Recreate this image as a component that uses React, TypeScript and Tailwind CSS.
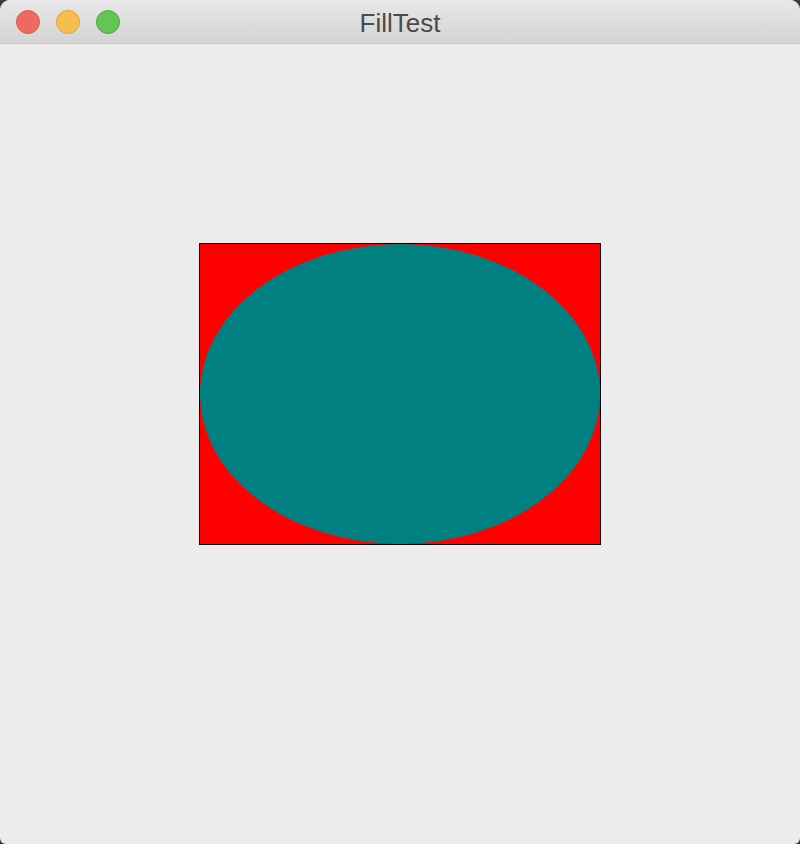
export default function App() {
  return (
    <div className="h-[844px] w-[800px] bg-[#3a3a3a]">
      <div className="flex h-full w-full flex-col overflow-hidden rounded-t-[10px] rounded-b-[6px] bg-[#ececec]">
        {/* title bar */}
        <div className="relative flex h-[44px] shrink-0 items-center justify-center border-b border-[#c4c4c4] bg-gradient-to-b from-[#e9e7e9] to-[#d4d4d4]">
          <div className="absolute left-[16px] top-[10px] flex gap-[16px]">
            <div className="h-[24px] w-[24px] rounded-full border border-[#de5750] bg-[#ee6a5f]" />
            <div className="h-[24px] w-[24px] rounded-full border border-[#dfa23a] bg-[#f5be4f]" />
            <div className="h-[24px] w-[24px] rounded-full border border-[#52a93f] bg-[#62c554]" />
          </div>
          <span className="pt-[3px] font-['Helvetica','Liberation_Sans',sans-serif] text-[26px] text-[#4a4a4a]">
            FillTest
          </span>
        </div>
        {/* canvas */}
        <div className="flex flex-1 justify-center pt-[199px]">
          <div className="h-[302px] w-[402px] border border-black bg-[#ff0000]">
            <div className="h-full w-full rounded-[50%] bg-[#008080]" />
          </div>
        </div>
      </div>
    </div>
  );
}
